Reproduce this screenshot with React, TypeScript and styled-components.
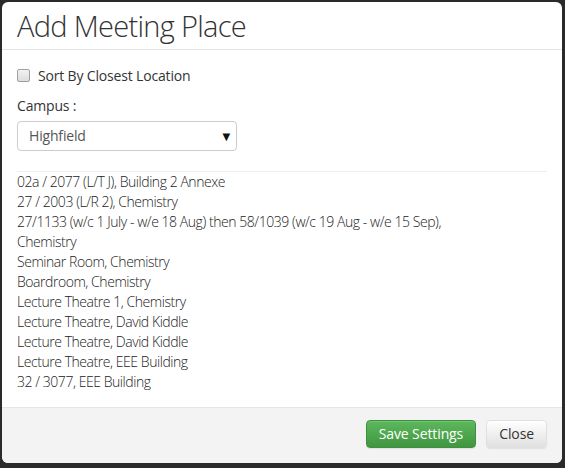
import React from "react";
import styled, { createGlobalStyle } from "styled-components";

const Global = createGlobalStyle`
  html, body { margin: 0; padding: 0; background: #2a2a2a; }
  body { font-family: "Open Sans", "DejaVu Sans", sans-serif; color: #333; }
  * { box-sizing: border-box; }
`;

const Backdrop = styled.div`
  width: 565px;
  height: 468px;
  padding: 2px 3px 5px 2px;
  display: flex;
`;

const Modal = styled.div`
  flex: 1;
  display: flex;
  flex-direction: column;
  background: #fff;
  border-radius: 6px;
  overflow: hidden;
`;

const Header = styled.div`
  height: 48px;
  padding: 0 15px;
  display: flex;
  align-items: center;
  border-bottom: 1px solid #e5e5e5;
`;

const Title = styled.h4`
  margin: 0;
  font-size: 29px;
  font-weight: 300;
  letter-spacing: -0.7px;
  color: #333;
  line-height: 1;
`;

const Body = styled.div`
  flex: 1;
  padding: 15px 15px 15px;
  font-size: 14px;
  line-height: 20px;
`;

const CheckRow = styled.label`
  display: flex;
  align-items: center;
  gap: 8px;
  height: 20px;
  margin-top: 1px;
  letter-spacing: -0.17px;
`;

const Box = styled.span`
  width: 13px;
  height: 13px;
  border: 1px solid #a0a0a0;
  border-radius: 2px;
  background: linear-gradient(#f2f2f2, #dcdcdc);
`;

const FieldLabel = styled.div`
  margin-top: 10px;
  letter-spacing: -0.17px;
`;

const Select = styled.div`
  margin-top: 5px;
  width: 220px;
  height: 30px;
  border: 1px solid #ccc;
  border-radius: 4px;
  display: flex;
  align-items: center;
  justify-content: space-between;
  padding: 0 6px 0 11px;
  color: #555;
  font-size: 14px;
  letter-spacing: -0.17px;
`;

const Arrow = styled.span`
  font-size: 10px;
  color: #111;
`;

const Rule = styled.div`
  margin-top: 20px;
  border-top: 1px solid #eee;
`;

const List = styled.ul`
  list-style: none;
  margin: 0;
  padding: 0;
  font-weight: 300;
  letter-spacing: -0.45px;
  color: #222;
`;

const Item = styled.li`
  line-height: 20px;
  max-width: 470px;
`;

const Footer = styled.div`
  height: 57px;
  border-top: 1px solid #e5e5e5;
  background: #f3f3f3;
  display: flex;
  align-items: center;
  justify-content: flex-end;
  gap: 10px;
  padding: 0 15px 2px;
`;

const Button = styled.button<{ $primary?: boolean }>`
  font-family: inherit;
  font-size: 14px;
  line-height: 20px;
  padding: 3px 12px;
  border-radius: 4px;
  cursor: pointer;
  letter-spacing: -0.1px;
  border: 1px solid ${(p) => (p.$primary ? "#3e8f3e" : "#e0e0e0")};
  color: ${(p) => (p.$primary ? "#fff" : "#333")};
  background: ${(p) =>
    p.$primary
      ? "linear-gradient(#5cb85c, #419641)"
      : "linear-gradient(#fff, #e0e0e0)"};
  box-shadow: inset 0 1px 0 rgba(255,255,255,.15), 0 1px 1px rgba(0,0,0,.075);
`;

const places = [
  "02a / 2077 (L/T J), Building 2 Annexe",
  "27 / 2003 (L/R 2), Chemistry",
  "27/1133 (w/c 1 July - w/e 18 Aug) then 58/1039 (w/c 19 Aug - w/e 15 Sep), Chemistry",
  "Seminar Room, Chemistry",
  "Boardroom, Chemistry",
  "Lecture Theatre 1, Chemistry",
  "Lecture Theatre, David Kiddle",
  "Lecture Theatre, David Kiddle",
  "Lecture Theatre, EEE Building",
  "32 / 3077, EEE Building",
];

export default function App() {
  return (
    <>
      <Global />
      <Backdrop>
        <Modal>
          <Header>
            <Title>Add Meeting Place</Title>
          </Header>
          <Body>
            <CheckRow>
              <Box />
              <span>Sort By Closest Location</span>
            </CheckRow>
            <FieldLabel>Campus :</FieldLabel>
            <Select>
              <span>Highfield</span>
              <Arrow>▼</Arrow>
            </Select>
            <Rule />
            <List>
              {places.map((p, i) => (
                <Item key={i}>{p}</Item>
              ))}
            </List>
          </Body>
          <Footer>
            <Button $primary>Save Settings</Button>
            <Button>Close</Button>
          </Footer>
        </Modal>
      </Backdrop>
    </>
  );
}
